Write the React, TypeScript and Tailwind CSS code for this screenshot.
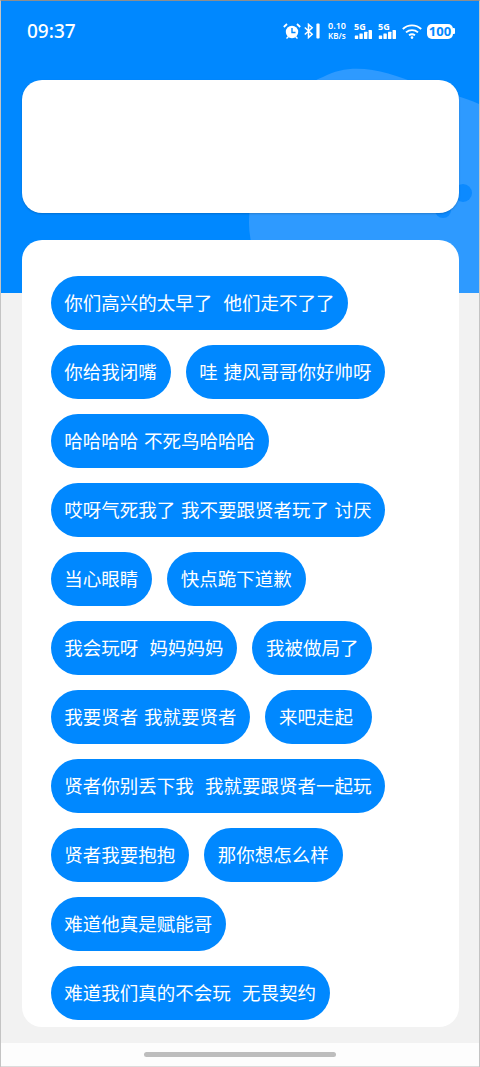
import React from "react";

const chips = [
  "你们高兴的太早了  他们走不了了",
  "你给我闭嘴",
  "哇 捷风哥哥你好帅呀",
  "哈哈哈哈 不死鸟哈哈哈",
  "哎呀气死我了 我不要跟贤者玩了 讨厌",
  "当心眼睛",
  "快点跪下道歉",
  "我会玩呀  妈妈妈妈",
  "我被做局了",
  "我要贤者 我就要贤者",
  "来吧走起 ",
  "贤者你别丢下我  我就要跟贤者一起玩",
  "贤者我要抱抱",
  "那你想怎么样",
  "难道他真是赋能哥",
  "难道我们真的不会玩  无畏契约",
];

function Signal() {
  return (
    <div className="flex flex-col items-start w-[19px] h-[16px]">
      <span className="text-[9px] leading-[7px] font-bold text-white">5G</span>
      <svg width="19" height="9" viewBox="0 0 19 9" fill="#fff">
        <rect x="0.8" y="5.5" width="3.4" height="3.5" rx="0.4" />
        <rect x="5.4" y="3.6" width="3.4" height="5.4" rx="0.4" />
        <rect x="10" y="1.8" width="3.4" height="7.2" rx="0.4" />
        <rect x="14.6" y="0" width="3.4" height="9" rx="0.4" />
      </svg>
    </div>
  );
}

export default function App() {
  return (
    <div className="relative w-[480px] h-[1067px] overflow-hidden bg-[#f2f2f2] font-['Noto_Sans','Noto_Sans_CJK_SC',sans-serif] border-t border-t-[#8e8e8e] border-x border-x-[#c4c4c4]">
      {/* blue header backdrop */}
      <div className="absolute left-0 top-0 w-full h-[292px] bg-[#0088ff] overflow-hidden">
        <svg width="480" height="292" viewBox="0 0 480 292" className="absolute left-0 top-0">
          <path
            d="M248 222 C248 170 285 88 322 76 C352 60 385 70 420 84 C445 93 465 96 480 104 L480 292 L270 292 C258 270 248 245 248 222 Z"
            fill="#2e9aff"
          />
          <circle cx="462" cy="192" r="9" fill="#0c8aff" />
          <circle cx="442" cy="209" r="8" fill="#0c8aff" />
        </svg>
      </div>

      <div className="relative flex flex-col h-full">
        {/* status bar */}
        <div className="h-[59px] flex items-center justify-between pl-[26px] pr-[24px] pt-[1px] text-white">
          <span className="text-[19px] font-medium leading-none">09:37</span>
          <div className="flex items-center h-[20px]">
            <svg width="18" height="16" viewBox="0 0 18 16" className="mr-[3px]">
              <circle cx="9" cy="9" r="6.2" fill="#fff" />
              <path d="M9 5V9.5H12.5" stroke="#0088ff" strokeWidth="1.4" fill="none" />
              <path d="M0.8 4 L4 1 M17.2 4 L14 1" stroke="#fff" strokeWidth="1.8" />
              <path d="M3.5 15.5l1.8-1.8M14.5 15.5l-1.8-1.8" stroke="#fff" strokeWidth="1.4" />
            </svg>
            <svg width="16" height="16" viewBox="0 0 16 16" fill="none" stroke="#fff" strokeWidth="1.5" className="mr-[8px]">
              <path d="M0.8 4.5 L8.2 11.2 L4.5 14.6 V1.4 L8.2 4.8 L0.8 11.5" />
              <rect x="12.4" y="0.5" width="3.2" height="15" rx="1" fill="#fff" stroke="none" />
            </svg>
            <div className="flex flex-col items-start w-[18px] mr-[8px] text-[9px] leading-[10px] font-semibold">
              <span>0.10</span>
              <span className="text-[8px] whitespace-nowrap">KB/s</span>
            </div>
            <div className="mr-[5px]"><Signal /></div>
            <div className="mr-[5px]"><Signal /></div>
            <svg width="20" height="15" viewBox="0 0 20 15" fill="none" stroke="#fff" strokeWidth="1.9" className="mr-[5px]">
              <path d="M0.8 5 C6 0.2 14 0.2 19.2 5" />
              <path d="M4 8.4 C7.5 5.4 12.5 5.4 16 8.4" />
              <path d="M7 11.2 C9 9.9 11 9.9 13 11.2" />
              <circle cx="10" cy="13.6" r="1.3" fill="#fff" stroke="none" />
            </svg>
            <div className="flex items-center">
              <div className="w-[26px] h-[15px] rounded-[5px] bg-white flex items-center justify-center text-[#0088ff] text-[13px] font-bold leading-none">100</div>
              <div className="w-[2px] h-[6px] bg-white rounded-r-[1px]" />
            </div>
          </div>
        </div>

        {/* cards */}
        <div className="flex flex-col gap-[27px] pl-[21px] pr-[20px] mt-[20px]">
          <div className="h-[133px] rounded-[20px] bg-white shadow-[0_1px_2px_rgba(0,0,0,0.18)]" />
          <div className="h-[787px] rounded-[20px] bg-white pt-[36px] pl-[28.5px] pr-[20px] overflow-hidden">
            <div className="flex flex-wrap gap-x-[15px] gap-y-[15px]">
              {chips.map((c) => (
                <span
                  key={c}
                  className="h-[54px] px-[13.75px] rounded-[27px] bg-[#0088ff] text-white text-[18.5px] leading-[53px] whitespace-pre [word-spacing:1.5px] font-['Noto_Sans_CJK_SC',sans-serif]"
                >
                  {c}
                </span>
              ))}
            </div>
          </div>
        </div>

        {/* gesture bar */}
        <div className="mt-auto h-[24px] bg-[#fdfdfd] flex justify-center pt-[9px] border-b border-b-[#dcdcdc]">
          <div className="w-[192px] h-[5px] rounded-full bg-[#bdbdbd]" />
        </div>
      </div>
    </div>
  );
}
